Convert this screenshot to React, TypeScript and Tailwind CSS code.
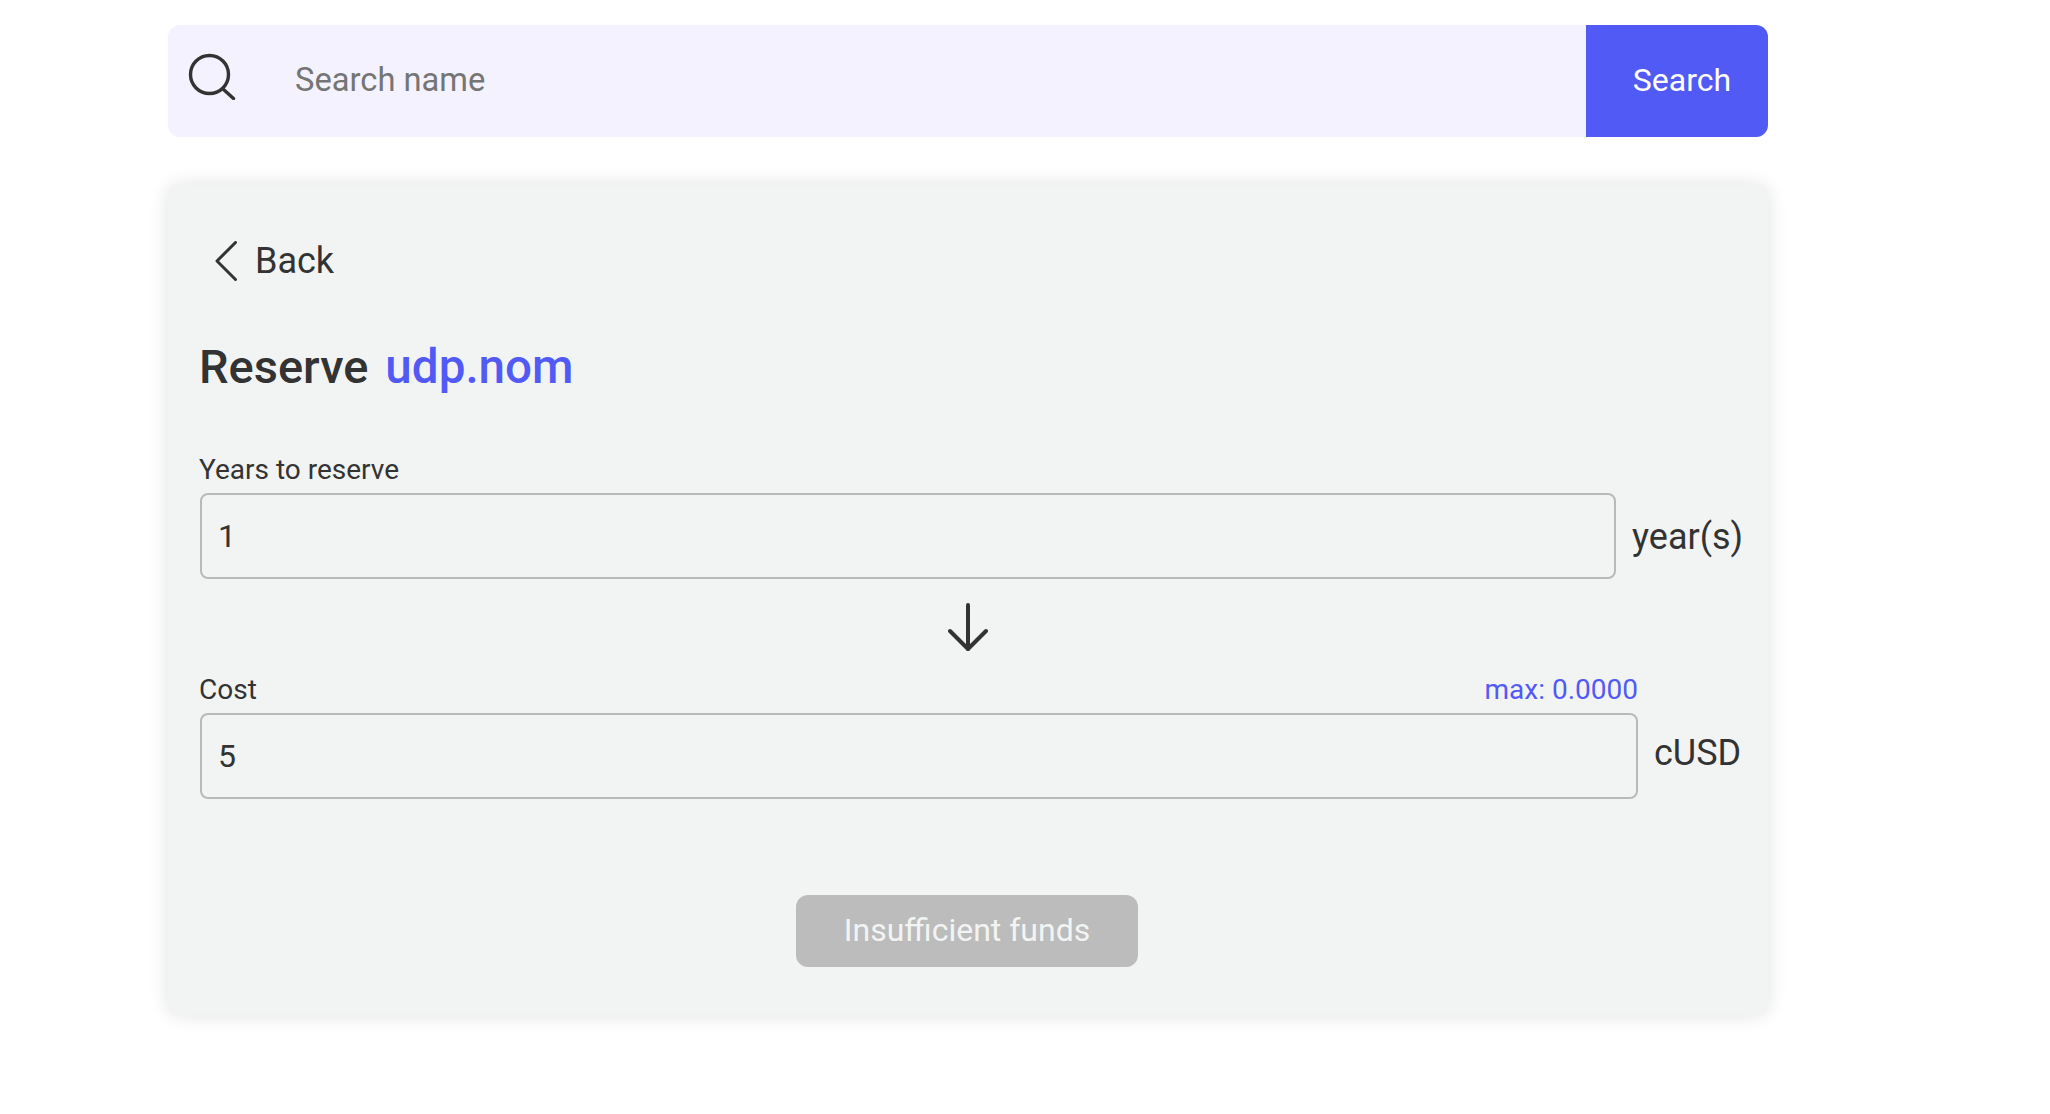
import React from 'react';

const font = "font-['Roboto',sans-serif]";

const SearchIcon = () => (
  <svg width="48" height="48" viewBox="0 0 48 48" fill="none" stroke="#333333" strokeWidth="3.4" strokeLinecap="round" className="mb-[10px]">
    <circle cx="21.5" cy="22.5" r="19" />
    <path d="M35 37 L45.5 46.5" />
  </svg>
);

const BackIcon = () => (
  <svg width="22" height="40" viewBox="0 0 22 40" fill="none" stroke="#333333" strokeWidth="3" strokeLinecap="round" strokeLinejoin="round">
    <path d="M20.5 1.5 L2 20 L20.5 38.5" />
  </svg>
);

const DownArrow = () => (
  <svg width="40" height="48" viewBox="0 0 40 48" fill="none" stroke="#333333" strokeWidth="4" strokeLinecap="round" strokeLinejoin="round">
    <path d="M20 2 L20 46" />
    <path d="M2 28 L20 46 L38 28" />
  </svg>
);

const App: React.FC = () => {
  return (
    <div className={`${font} min-h-[1114px] bg-white pl-[168px] pt-[25px] text-[#333333]`}>
      <div className="w-[1600px]">
        <div className="flex h-[112px] overflow-hidden rounded-xl bg-[#f4f2ff]">
          <div className="flex flex-1 items-center pl-[20px]">
            <SearchIcon />
            <input
              readOnly
              placeholder="Search name"
              className="ml-[59px] flex-1 bg-transparent text-[32.7px] outline-none placeholder:text-[#757575]"
            />
          </div>
          <button className="w-[182px] bg-[#525af5] pb-[2px] pl-[10px] text-[32px] text-white">Search</button>
        </div>

        <div className="mt-[48px] h-[830px] rounded-xl bg-[#f2f4f4] px-[32px] pt-[53px] shadow-[0_0_20px_rgba(0,0,0,0.12)]">
          <div className="flex h-[46px] items-center text-[36px]">
            <div className="ml-[15px]">
              <BackIcon />
            </div>
            <span className="ml-[18px]">Back</span>
          </div>

          <h1 className="-ml-[1px] mt-[54px] flex gap-[17px] text-[47px] leading-[58px] font-medium">
            <span>Reserve</span>
            <span className="text-[47.6px] text-[#525af5]">udp.nom</span>
          </h1>

          <label className="-ml-[1px] mt-[56px] block text-[28px] leading-[36px]">Years to reserve</label>
          <div className="mt-[5px] flex items-center gap-[16px]">
            <div className="flex h-[86px] w-[1416px] shrink-0 items-center rounded-lg border-2 border-[#b9b9b9] px-[16px] text-[32px]">1</div>
            <span className="mt-[1px] whitespace-nowrap text-[36px]">year(s)</span>
          </div>

          <div className="mt-[24px] flex w-[1536px] justify-center">
            <DownArrow />
          </div>

          <div className="-ml-[1px] mt-[21px] flex w-[1439px] items-center justify-between leading-[36px]">
            <label className="text-[28px]">Cost</label>
            <span className="text-[28px] text-[#525af5]">max: 0.0000</span>
          </div>
          <div className="mt-[5px] flex items-center gap-[16px]">
            <div className="flex h-[86px] w-[1438px] shrink-0 items-center rounded-lg border-2 border-[#b9b9b9] px-[16px] text-[32px]">5</div>
            <span className="mb-[6px] whitespace-nowrap text-[36px]">cUSD</span>
          </div>

          <div className="mt-[96px] flex w-[1534px] justify-center">
            <button className="h-[72px] w-[342px] rounded-xl bg-[#bcbcbc] pb-[2px] text-[32px] text-[#f2f4f4]">Insufficient funds</button>
          </div>
        </div>
      </div>
    </div>
  );
};

export default App;
